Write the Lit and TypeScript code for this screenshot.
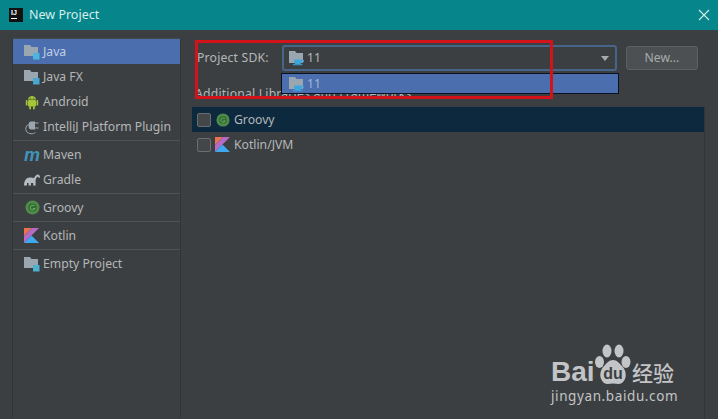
import { LitElement, html, css, svg } from "lit";
import { customElement } from "lit/decorators.js";

const folder = (sq = "#4db3e0") => svg`<svg width="16" height="16" viewBox="0 0 16 16">
  <path d="M0 1h6l1.5 2H14v9H0z" fill="#9aa7b0"/><rect x="9" y="9" width="6.5" height="6.5" fill="${sq}"/></svg>`;
const jdk = () => svg`<svg width="16" height="16" viewBox="0 0 16 16">
  <path d="M0 1h6l1.5 2H14v10H0z" fill="#9aa7b0"/>
  <path d="M5 9.5h7.5v2.2c0 1.4-1 2.3-2.3 2.3H7.3C6 14 5 13.100 5 11.700z" fill="#3fa6dc"/>
  <path d="M12.500 10h1.800v2h-1.800" fill="none" stroke="#3fa6dc" stroke-width="1"/>
  <rect x="4" y="14.200" width="9.500" height="1" fill="#3fa6dc"/></svg>`;
const android = () => svg`<svg width="16" height="16" viewBox="0 0 16 16" fill="#a4c439">
  <path d="M4 5.500C4 3.500 6 2 8 2s4 1.500 4 3.500z"/><rect x="4" y="6" width="8" height="6.500" rx="1"/>
  <rect x="1.800" y="6" width="1.700" height="5.500" rx=".85"/><rect x="12.500" y="6" width="1.700" height="5.500" rx=".85"/>
  <rect x="5.200" y="12" width="1.800" height="3.500" rx=".9"/><rect x="9" y="12" width="1.800" height="3.500" rx=".9"/>
  <circle cx="6.300" cy="4" r=".5" fill="#3c3f41"/><circle cx="9.700" cy="4" r=".5" fill="#3c3f41"/></svg>`;
const plugin = () => svg`<svg width="16" height="16" viewBox="0 0 16 16">
  <path d="M7 2.500h4v8H7C5.500 10.500 4.500 9 4.500 6.500S5.500 2.500 7 2.500z" fill="#9aa7b0"/>
  <path d="M11 4h3.500M11 9h3.500" stroke="#9aa7b0" stroke-width="1.200"/>
  <path d="M4.500 5.500C1.500 7 1 11 3 13s6 2.500 8.500.5" fill="none" stroke="#9aa7b0" stroke-width="1"/></svg>`;
const gradle = () => svg`<svg width="16" height="16" viewBox="0 0 16 16">
  <path d="M0 13.500c0-4.500 2-8 6-8 2 0 3 .5 4 .8.800-2 2.200-3.800 3.800-3.800 1.200 0 2.200 1 2.200 2.300 0 .8-.5 1.200-1 1.200-.3-.8-.8-1.300-1.400-1.300-1 0-1.600 2-2 3.300v5.500h-2.400v-2.500H7v2.500H4.600v-2.500H3v2.500H.5z" fill="#b4bcc2"/></svg>`;
const groovy = (s = 15) => svg`<svg width="${s}" height="${s}" viewBox="0 0 16 16">
  <circle cx="8" cy="8" r="7.500" fill="#4f8a4b"/><circle cx="8" cy="8" r="4.300" fill="#2e6b2c"/>
  <path d="M10 6.500A2.500 2.500 0 1 0 10.500 9H8.300" fill="none" stroke="#6fa56a" stroke-width="1.100"/></svg>`;
const kotlin = () => svg`<svg width="16" height="16" viewBox="0 0 16 16">
  <polygon points="0,0 8,0 0,8" fill="#e8734d"/><polygon points="8,0 15,0 0,15 0,8" fill="#b56bc4"/>
  <polygon points="7.500,7.500 15,15 0,15" fill="#3fa9f0"/></svg>`;

interface Item { label: string; icon: unknown; selected?: boolean }
const groups: Item[][] = [
  [
    { label: "Java", icon: folder(), selected: true },
    { label: "Java FX", icon: folder("#4aa8d0") },
    { label: "Android", icon: android() },
    { label: "IntelliJ Platform Plugin", icon: plugin() },
  ],
  [
    { label: "Maven", icon: html`<span class="m">m</span>` },
    { label: "Gradle", icon: gradle() },
  ],
  [{ label: "Groovy", icon: groovy() }],
  [{ label: "Kotlin", icon: kotlin() }],
  [{ label: "Empty Project", icon: folder("#4db0cc") }],
];

@customElement("app-root")
export class AppRoot extends LitElement {
  static styles = css`
    :host {
      display: block;
      width: 718px;
      height: 419px;
      overflow: hidden;
      position: relative;
      background: #3c3f41;
      color: #b4b7b9;
      font-family: "Noto Sans", "Open Sans", sans-serif;
      font-size: 12.2px;
      line-height: 16px;
    }
    .title {
      height: 30px;
      background: #06858a;
      display: flex;
      align-items: center;
      padding: 0 9px;
      gap: 6px;
      color: #d6eeee;
      font-size: 12.5px;
    }
    .logo {
      width: 14px;
      height: 14px;
      background: #111;
      color: #fff;
      font: bold 7px/8px "Liberation Sans", sans-serif;
      padding: 1px 0 0 2px;
      box-sizing: border-box;
      position: relative;
    }
    .logo i {
      display: block;
      width: 6px;
      height: 1px;
      background: #fff;
      margin-top: 1px;
    }
    .close {
      margin-left: auto;
      display: flex;
      margin-right: -1px;
    }
    .main {
      display: grid;
      grid-template-columns: 169px 513px;
      column-gap: 11px;
      padding: 8px 0 0 12px;
      height: 381px;
      box-sizing: border-box;
    }
    .side {
      border-left: 1px solid #323436;
      border-right: 1px solid #323436;
      border-top: 1px solid #46494c;
      height: 381px;
      box-sizing: border-box;
    }
    .group + .group {
      border-top: 1px solid #505254;
      margin-top: 1px;
      padding-top: 1px;
    }
    .item {
      height: 25px;
      display: flex;
      align-items: center;
      padding-left: 11px;
      gap: 3px;
      white-space: nowrap;
    }
    .item.sel {
      background: #4b6eaf;
      color: #c3cfe4;
    }
    .ic {
      width: 16px;
      height: 16px;
      display: flex;
      align-items: center;
      justify-content: center;
      flex: none;
    }
    .m {
      color: #3f94bb;
      font: italic bold 18px/16px "Liberation Sans", sans-serif;
    }
    .right {
      display: flex;
      flex-direction: column;
      padding-top: 7px;
    }
    .sdk {
      display: flex;
      align-items: center;
      height: 26px;
      padding-left: 5px;
    }
    .sdk label {
      width: 85px;
      flex: none;
      letter-spacing: 0.2px;
    }
    .combo {
      width: 335px;
      height: 26px;
      box-sizing: border-box;
      border: 2px solid #47648a;
      border-radius: 3px;
      background: #3c3f41;
      display: flex;
      align-items: center;
      padding-left: 5px;
      gap: 2px;
    }
    .arrow {
      margin-left: auto;
      margin-right: 6px;
      width: 0;
      height: 0;
      border-left: 4.5px solid transparent;
      border-right: 4.5px solid transparent;
      border-top: 5px solid #a9acae;
    }
    .new {
      width: 72px;
      height: 24px;
      margin-left: 9px;
      box-sizing: border-box;
      border: 1px solid #5e6060;
      border-radius: 3px;
      background: #4c5052;
      color: #a9abad;
      display: flex;
      align-items: center;
      justify-content: center;
    }
    .libs {
      margin: 15px 0 4px 3px;
      height: 16px;
      white-space: nowrap;
      letter-spacing: 0.2px;
    }
    .list {
      border-right: 1px solid #323436;
      flex: 1;
    }
    .row {
      height: 25px;
      display: flex;
      align-items: center;
      padding-left: 5px;
      gap: 3px;
    }
    .row.sel {
      background: #0d293e;
      margin-top: 1px;
    }
    .check {
      width: 14px;
      height: 14px;
      box-sizing: border-box;
      border: 1px solid #6b6e70;
      border-radius: 2px;
      background: #43474a;
      flex: none;
      margin-right: 1px;
    }
    .popup {
      position: absolute;
      left: 281px;
      top: 73px;
      width: 338px;
      height: 21px;
      box-sizing: border-box;
      background: #4b6eaf;
      border: 1px solid #0c1020;
      display: flex;
      align-items: center;
      padding-left: 7px;
      gap: 2px;
      color: #a3b6d8;
    }
    .mark {
      position: absolute;
      left: 195px;
      top: 40px;
      width: 358px;
      height: 59px;
      box-sizing: border-box;
      border: 3px solid #d3131a;
      pointer-events: none;
    }
    .wm {
      position: absolute;
      left: 551px;
      top: 344px;
      width: 130px;
      height: 62px;
      color: #c2c4c7;
    }
    .wm-top {
      display: flex;
      align-items: flex-end;
      height: 42px;
    }
    .bai {
      font: bold 28px/28px "Liberation Sans", sans-serif;
      width: 44px;
    }
    .paw {
      flex: none;
      margin-left: -1px;
    }
    .jing {
      font: 500 21px/24px "Noto Sans CJK SC", sans-serif;
      margin-left: 1px;
      margin-bottom: 2px;
      white-space: nowrap;
    }
    .url {
      font: 13.5px/16px "Noto Sans", sans-serif;
      letter-spacing: 0.6px;
      margin-top: 2px;
      white-space: nowrap;
    }
  `;

  render() {
    return html`
      <div class="title">
        <div class="logo">IJ<i></i></div>
        <span>New Project</span>
        <span class="close">
          <svg width="12" height="12" viewBox="0 0 12 12"><path d="M1 1l10 10M11 1L1 11" stroke="#d6eeee" stroke-width="1.100" fill="none"/></svg>
        </span>
      </div>
      <div class="main">
        <div class="side">
          ${groups.map(
            (g) => html`<div class="group">
              ${g.map(
                (i) => html`<div class="item ${i.selected ? "sel" : ""}">
                  <span class="ic">${i.icon}</span><span>${i.label}</span>
                </div>`
              )}
            </div>`
          )}
        </div>
        <div class="right">
          <div class="sdk">
            <label>Project SDK:</label>
            <div class="combo"><span class="ic">${jdk()}</span><span>11</span><span class="arrow"></span></div>
            <div class="new">New...</div>
          </div>
          <div class="libs">Additional Libraries and Frameworks:</div>
          <div class="list">
            <div class="row sel"><span class="check"></span><span class="ic">${groovy(14)}</span><span>Groovy</span></div>
            <div class="row"><span class="check"></span><span class="ic">${kotlin()}</span><span>Kotlin/JVM</span></div>
          </div>
        </div>
      </div>
      <div class="popup"><span class="ic">${jdk()}</span><span>11</span></div>
      <div class="mark"></div>
      <div class="wm">
        <div class="wm-top">
          <span class="bai">Bai</span>
          <svg class="paw" width="37" height="42" viewBox="0 0 37 42" fill="currentColor">
            <ellipse cx="5.500" cy="18" rx="4.500" ry="6"/>
            <ellipse cx="13" cy="7" rx="4.500" ry="6.500"/>
            <ellipse cx="25" cy="7" rx="4.500" ry="6.500"/>
            <ellipse cx="32" cy="18" rx="4.500" ry="6"/>
            <path d="M19 16c4 0 6 3 9 6 5 5 5 13 0 17-3 2-6 .5-9 .5s-6 1.500-9-.5c-5-4-5-12 0-17 3-3 5-6 9-6z"/>
            <text x="19" y="35" font-family="Liberation Sans" font-weight="bold" font-size="16" text-anchor="middle" fill="#3c3f41">du</text>
          </svg>
          <span class="jing">经验</span>
        </div>
        <div class="url">jingyan.baidu.com</div>
      </div>
    `;
  }
}
